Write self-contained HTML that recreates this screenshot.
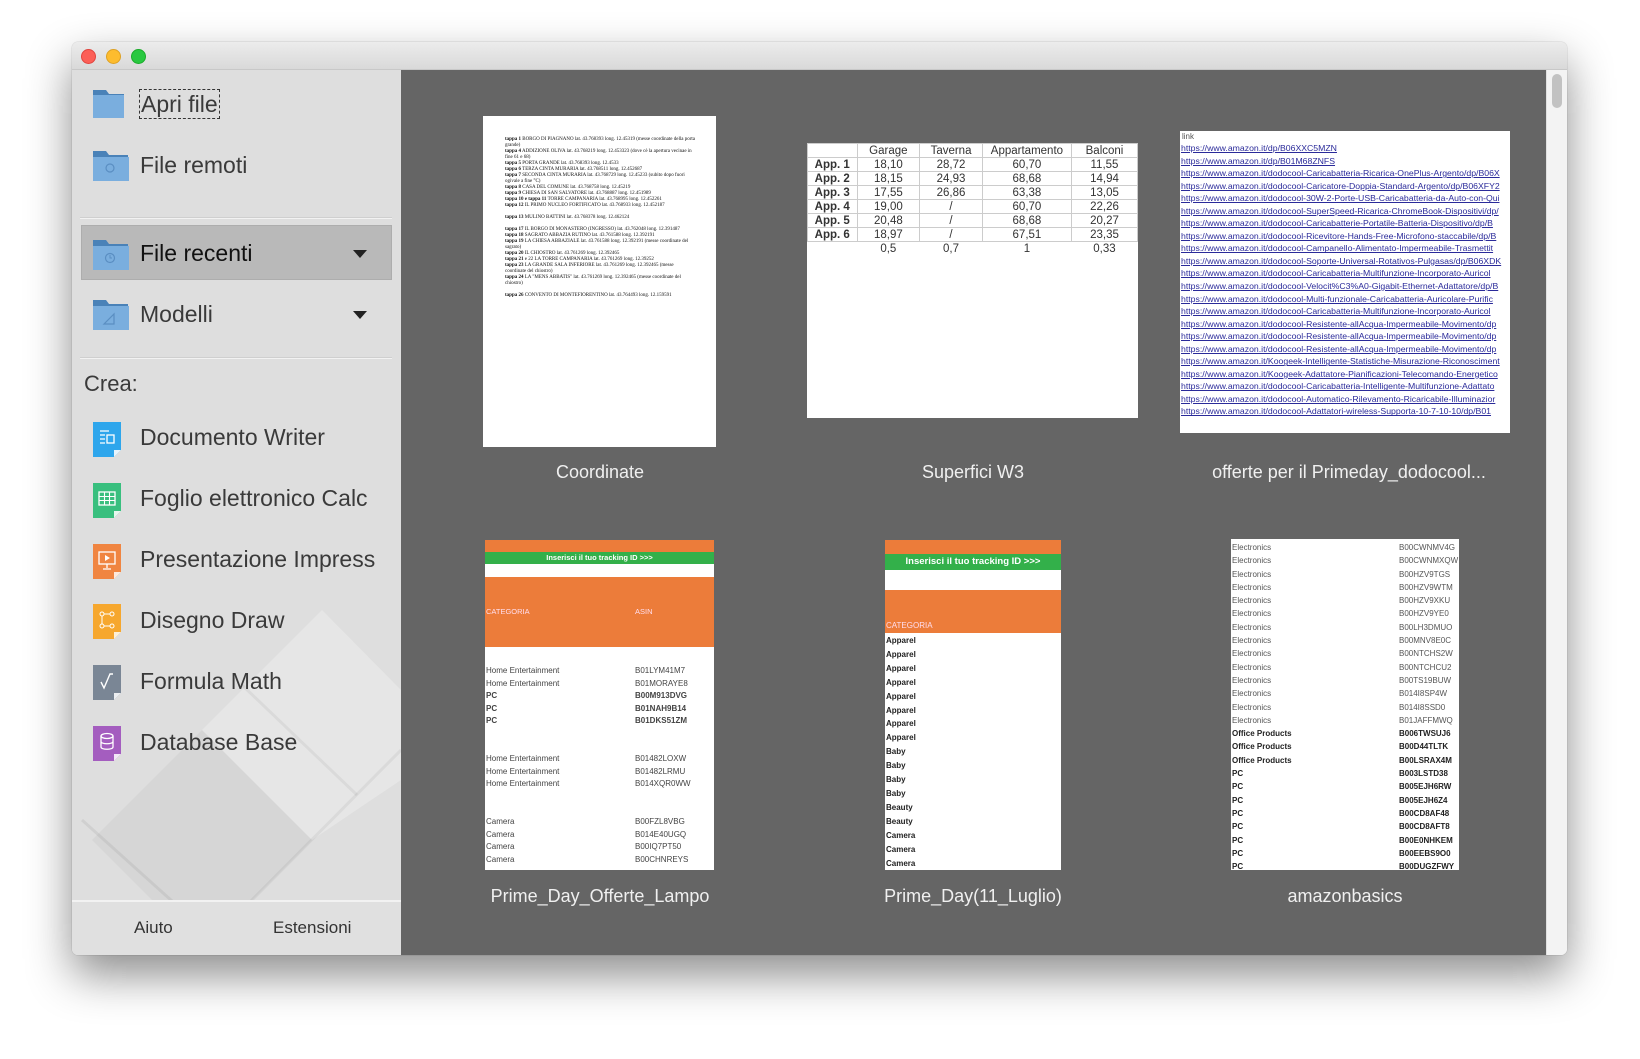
<!DOCTYPE html>
<html><head><meta charset="utf-8">
<style>
*{margin:0;padding:0;box-sizing:border-box}
body{width:1640px;height:1059px;background:#fff;font-family:"Liberation Sans",sans-serif;position:relative;overflow:hidden}
.win{position:absolute;left:72px;top:42px;width:1495px;height:913px;border-radius:6px;overflow:hidden;box-shadow:0 20px 45px rgba(0,0,0,.45),0 0 1px rgba(0,0,0,.4)}
.title{position:absolute;left:0;top:0;width:100%;height:28px;background:linear-gradient(#ececec,#d9d9d9);border-bottom:1px solid #c8c8c8}
.dot{position:absolute;top:7px;width:15px;height:15px;border-radius:50%}
.side{position:absolute;left:0;top:28px;width:329px;height:885px;background:#dedede;overflow:hidden}
.item{position:absolute;left:68px;font-size:23px;color:#3a3a3a;line-height:28px}
.sep{position:absolute;left:8px;width:312px;height:2px;background:#f2f2f2;border-top:1px solid #cfcfcf}
.hl{position:absolute;left:9px;top:155px;width:311px;height:55px;background:#b9b9b9;border:1px solid #adadad}
.arrow{position:absolute;left:281px;width:0;height:0;border-left:7px solid transparent;border-right:7px solid transparent;border-top:8px solid #222}
.ic{position:absolute;left:20px}
.bottom{position:absolute;left:0;top:830px;width:329px;height:55px;background:#e0e0e0;border-top:2px solid #f2f2f2}
.bottom span{position:absolute;top:16px;font-size:17px;color:#333}
.main{position:absolute;left:329px;top:28px;width:1145px;height:885px;background:#656565}
.sb{position:absolute;left:1474px;top:28px;width:21px;height:885px;background:#f3f3f3;border-left:1px solid #e0e0e0}
.thumb{position:absolute;background:#fff;overflow:hidden}
.lbl{position:absolute;color:#f0f0f0;font-size:18px;text-align:center;width:400px}
.tiny{font-size:5px;line-height:6px;color:#111;font-family:"Liberation Serif",serif}
table.sf{border-collapse:collapse;font-size:11.5px;font-family:"Liberation Sans",sans-serif;color:#333;width:100%}
table.sf td{border:1px solid #ccc;text-align:center;height:14px;line-height:12px;padding:0}
.links{font-size:8.7px;line-height:12.55px;color:#2a2a9a;font-family:"Liberation Sans",sans-serif;white-space:nowrap;text-decoration:underline;padding-left:1px}
.rows{font-size:8px;line-height:12.6px;font-family:"Liberation Sans",sans-serif;color:#444;white-space:nowrap}
</style></head><body>
<div class="win">
 <div class="title">
  <div class="dot" style="left:9px;background:#fc5f57;border:1px solid #e0443e"></div>
  <div class="dot" style="left:34px;background:#fdbc2e;border:1px solid #dea123"></div>
  <div class="dot" style="left:59px;background:#29c840;border:1px solid #1aab29"></div>
 </div>
 <div class="side">
  <svg style="position:absolute;left:0;top:520px" width="329" height="320"><polygon points="20,250 130,140 240,250 170,320 90,320" fill="rgba(0,0,0,.035)"/><polygon points="130,140 250,20 329,100 329,190 240,250" fill="rgba(255,255,255,.25)"/><polyline points="10,230 110,320" stroke="rgba(0,0,0,.06)" stroke-width="3" fill="none"/><polyline points="170,320 329,160" stroke="rgba(0,0,0,.05)" stroke-width="3" fill="none"/><polyline points="170,95 285,205" stroke="rgba(0,0,0,.05)" stroke-width="3" fill="none"/></svg>
  <svg class="ic" style="top:18px" width="33" height="30"><path d="M1 2h13l3 4h15v24H1z" fill="#4a82b8"/><rect x="1" y="7" width="31" height="23" fill="#7aaede"/></svg>
  <div class="item" style="top:20px;outline:1px dashed #333;padding:0 1px">Apri file</div>
  <svg class="ic" style="top:79px" width="37" height="32"><path d="M1 2h13l3 4h19v26H1z" fill="#4a82b8"/><rect x="1" y="8" width="36" height="24" fill="#7aaede"/><circle cx="18" cy="19" r="4" fill="none" stroke="#5a8ec2" stroke-width="1.2"/></svg>
  <div class="item" style="top:81px">File remoti</div>
  <div class="sep" style="top:147px"></div>
  <div class="hl"></div>
  <svg class="ic" style="top:168px" width="37" height="32"><path d="M1 2h13l3 4h19v26H1z" fill="#4a82b8"/><rect x="1" y="8" width="36" height="24" fill="#7aaede"/><circle cx="18" cy="20" r="4.5" fill="none" stroke="#5a8ec2" stroke-width="1.2"/><path d="M18 17v3h2" stroke="#5a8ec2" fill="none"/></svg>
  <div class="item" style="top:169px;color:#111">File recenti</div>
  <div class="arrow" style="top:180px"></div>
  <svg class="ic" style="top:228px" width="37" height="32"><path d="M1 2h13l3 4h19v26H1z" fill="#4a82b8"/><rect x="1" y="8" width="36" height="24" fill="#7aaede"/><path d="M12 26l10-10v10z" fill="none" stroke="#5a8ec2" stroke-width="1.2"/></svg>
  <div class="item" style="top:230px">Modelli</div>
  <div class="arrow" style="top:241px"></div>
  <div class="sep" style="top:287px"></div>
  <div class="item" style="left:12px;top:300px;font-size:22px">Crea:</div>
  <svg class="ic" style="top:351px" width="30" height="37"><path d="M1 1h28v28l-7 7H1z" fill="#2ea6ec"/><path d="M22 36l7-7h-7z" fill="#e8f4fc"/><path d="M8 10h9M8 14h5M8 18h5M8 22h5" stroke="#fff" stroke-width="1.3"/><rect x="15" y="14" width="7" height="8" fill="none" stroke="#fff" stroke-width="1.3"/></svg>
  <div class="item" style="top:353px">Documento Writer</div>
  <svg class="ic" style="top:412px" width="30" height="37"><path d="M1 1h28v28l-7 7H1z" fill="#38bf7e"/><path d="M22 36l7-7h-7z" fill="#e6f7ee"/><rect x="7" y="10" width="16" height="13" fill="none" stroke="#fff" stroke-width="1.3"/><path d="M7 14.5h16M7 18.5h16M12.5 10v13M17.5 10v13" stroke="#fff" stroke-width="1.1"/></svg>
  <div class="item" style="top:414px">Foglio elettronico Calc</div>
  <svg class="ic" style="top:473px" width="30" height="37"><path d="M1 1h28v28l-7 7H1z" fill="#f08541"/><path d="M22 36l7-7h-7z" fill="#fde9dc"/><rect x="7" y="9" width="16" height="12" fill="none" stroke="#fff" stroke-width="1.3"/><path d="M13 12v6l5-3z" fill="#fff"/><path d="M15 21v4M11 26h8" stroke="#fff" stroke-width="1.3"/></svg>
  <div class="item" style="top:475px">Presentazione Impress</div>
  <svg class="ic" style="top:533px" width="30" height="37"><path d="M1 1h28v28l-7 7H1z" fill="#f6a72e"/><path d="M22 36l7-7h-7z" fill="#fdf0d8"/><circle cx="10" cy="11" r="2" fill="none" stroke="#fff"/><circle cx="20" cy="11" r="2" fill="none" stroke="#fff"/><circle cx="10" cy="23" r="2" fill="none" stroke="#fff"/><circle cx="20" cy="23" r="2" fill="none" stroke="#fff"/><path d="M12 11h6M10 13v8M12 23h6" stroke="#fff"/></svg>
  <div class="item" style="top:536px">Disegno Draw</div>
  <svg class="ic" style="top:594px" width="30" height="37"><path d="M1 1h28v28l-7 7H1z" fill="#7a8695"/><path d="M22 36l7-7h-7z" fill="#eceef1"/><path d="M9 18l3 6 6-14h3" stroke="#fff" stroke-width="1.4" fill="none"/></svg>
  <div class="item" style="top:597px">Formula Math</div>
  <svg class="ic" style="top:655px" width="30" height="37"><path d="M1 1h28v28l-7 7H1z" fill="#a45dbf"/><path d="M22 36l7-7h-7z" fill="#f2e8f6"/><ellipse cx="15" cy="11" rx="6" ry="2.5" fill="none" stroke="#fff" stroke-width="1.3"/><path d="M9 11v11c0 3 12 3 12 0V11M9 16.5c0 3 12 3 12 0" fill="none" stroke="#fff" stroke-width="1.3"/></svg>
  <div class="item" style="top:658px">Database Base</div>
  <div class="bottom"><span style="left:62px">Aiuto</span><span style="left:201px">Estensioni</span></div>
 </div>
 <div class="main"></div>
 <div class="sb"><div style="position:absolute;left:5px;top:4px;width:10px;height:34px;border-radius:5px;background:#c2c2c2"></div></div>
</div>

<div class="thumb" style="left:483px;top:116px;width:233px;height:331px">
 <div class="tiny" style="position:absolute;left:22px;top:21px;width:190px">
 <b>tappa 1</b> BORGO DI PIAGNANO lat. 43.768393 long. 12.45319 (messe coordinate della porta grande)<br><b>tappa 4</b> ADDIZIONE OLIVA lat. 43.768219 long. 12.453323 (dove cè la apertura vecinae in fine 61 e 68)<br><b>tappa 5</b> PORTA GRANDE lat. 43.768393 long. 12.4533<br><b>tappa 6</b> TERZA CINTA MURARIA lat. 43.768511 long. 12.452687<br><b>tappa 7</b> SECONDA CINTA MURARIA lat. 43.768729 long. 12.45233 (subito dopo fuori ogivale a fine °C)<br><b>tappa 8</b> CASA DEL COMUNE lat. 43.768758 long. 12.45219<br><b>tappa 9</b> CHIESA DI SAN SALVATORE lat. 43.768887 long. 12.451989<br><b>tappa 10 e tappa 11</b> TORRE CAMPANARIA lat. 43.768995 long. 12.452261<br><b>tappa 12</b> IL PRIMO NUCLEO FORTIFICATO lat. 43.768933 long. 12.452187<br><br><b>tappa 13</b> MULINO BATTINI lat. 43.768378 long. 12.462124<br><br><b>tappa 17</b> IL BORGO DI MONASTERO (INGRESSO) lat. 43.762048 long. 12.391487<br><b>tappa 18</b> SAGRATO ABBAZIA RUTINO lat. 43.761588 long. 12.392191<br><b>tappa 19</b> LA CHIESA ABBAZIALE lat. 43.761588 long. 12.392191 (messe coordinate del sagrato)<br><b>tappa 20</b> IL CHIOSTRO lat. 43.761269 long. 12.392465<br><b>tappa 21</b> e 22 LA TORRE CAMPANARIA lat. 43.761269 long. 12.39252<br><b>tappa 23</b> LA GRANDE SALA INFERIORE lat. 43.761269 long. 12.392465 (messe coordinate del chiostro)<br><b>tappa 24</b> LA "MENS ABBATIS" lat. 43.761269 long. 12.392465 (messe coordinate del chiostro)<br><br><b>tappa 26</b> CONVENTO DI MONTEFIORENTINO lat. 43.764493 long. 12.159591
 </div>
</div>
<div class="lbl" style="left:400px;top:462px">Coordinate</div>

<div class="thumb" style="left:807px;top:143px;width:331px;height:275px">
 <table class="sf">
  <tr><td style="width:15%"></td><td style="width:19%">Garage</td><td style="width:19%">Taverna</td><td style="width:27%">Appartamento</td><td style="width:20%">Balconi</td></tr>
  <tr><td><b>App. 1</b></td><td>18,10</td><td>28,72</td><td>60,70</td><td>11,55</td></tr>
  <tr><td><b>App. 2</b></td><td>18,15</td><td>24,93</td><td>68,68</td><td>14,94</td></tr>
  <tr><td><b>App. 3</b></td><td>17,55</td><td>26,86</td><td>63,38</td><td>13,05</td></tr>
  <tr><td><b>App. 4</b></td><td>19,00</td><td>/</td><td>60,70</td><td>22,26</td></tr>
  <tr><td><b>App. 5</b></td><td>20,48</td><td>/</td><td>68,68</td><td>20,27</td></tr>
  <tr><td><b>App. 6</b></td><td>18,97</td><td>/</td><td>67,51</td><td>23,35</td></tr>
  <tr><td style="border:none"></td><td style="border:none">0,5</td><td style="border:none">0,7</td><td style="border:none">1</td><td style="border:none">0,33</td></tr>
 </table>
</div>
<div class="lbl" style="left:773px;top:462px">Superfici W3</div>

<div class="thumb" style="left:1180px;top:131px;width:330px;height:302px">
 <div style="font-size:8px;color:#555;padding-left:2px;line-height:10px;margin-top:1px">link</div>
 <div class="links">https://www.amazon.it/dp/B06XXC5MZN<br>https://www.amazon.it/dp/B01M68ZNFS<br>https://www.amazon.it/dodocool-Caricabatteria-Ricarica-OnePlus-Argento/dp/B06X<br>https://www.amazon.it/dodocool-Caricatore-Doppia-Standard-Argento/dp/B06XFY2<br>https://www.amazon.it/dodocool-30W-2-Porte-USB-Caricabatteria-da-Auto-con-Qui<br>https://www.amazon.it/dodocool-SuperSpeed-Ricarica-ChromeBook-Dispositivi/dp/<br>https://www.amazon.it/dodocool-Caricabatterie-Portatile-Batteria-Dispositivo/dp/B<br>https://www.amazon.it/dodocool-Ricevitore-Hands-Free-Microfono-staccabile/dp/B<br>https://www.amazon.it/dodocool-Campanello-Alimentato-Impermeabile-Trasmettit<br>https://www.amazon.it/dodocool-Soporte-Universal-Rotativos-Pulgasas/dp/B06XDK<br>https://www.amazon.it/dodocool-Caricabatteria-Multifunzione-Incorporato-Auricol<br>https://www.amazon.it/dodocool-Velocit%C3%A0-Gigabit-Ethernet-Adattatore/dp/B<br>https://www.amazon.it/dodocool-Multi-funzionale-Caricabatteria-Auricolare-Purific<br>https://www.amazon.it/dodocool-Caricabatteria-Multifunzione-Incorporato-Auricol<br>https://www.amazon.it/dodocool-Resistente-allAcqua-Impermeabile-Movimento/dp<br>https://www.amazon.it/dodocool-Resistente-allAcqua-Impermeabile-Movimento/dp<br>https://www.amazon.it/dodocool-Resistente-allAcqua-Impermeabile-Movimento/dp<br>https://www.amazon.it/Koogeek-Intelligente-Statistiche-Misurazione-Riconosciment<br>https://www.amazon.it/Koogeek-Adattatore-Pianificazioni-Telecomando-Energetico<br>https://www.amazon.it/dodocool-Caricabatteria-Intelligente-Multifunzione-Adattato<br>https://www.amazon.it/dodocool-Automatico-Rilevamento-Ricaricabile-Illuminazior<br>https://www.amazon.it/dodocool-Adattatori-wireless-Supporta-10-7-10-10/dp/B01</div>
</div>
<div class="lbl" style="left:1149px;top:462px">offerte per il Primeday_dodocool...</div>

<div class="thumb" style="left:485px;top:540px;width:229px;height:330px">
 <div style="height:12px;background:#ec7c3a"></div>
 <div style="height:12px;background:#33b04a;color:#fff;font-size:7.5px;font-weight:bold;text-align:center;line-height:12px">Inserisci il tuo tracking ID &gt;&gt;&gt;</div>
 <div style="height:13px;background:#fff"></div>
 <div style="height:70px;background:#ec7c3a;position:relative;color:#fde;font-size:7.5px"><span style="position:absolute;left:1px;top:30px">CATEGORIA</span><span style="position:absolute;left:150px;top:30px">ASIN</span></div>
 <div class="rows" style="position:absolute;left:1px;top:125px">Home Entertainment<br>Home Entertainment<br><b>PC</b><br><b>PC</b><br><b>PC</b><br><br><br>Home Entertainment<br>Home Entertainment<br>Home Entertainment<br><br><br>Camera<br>Camera<br>Camera<br>Camera</div>
 <div class="rows" style="position:absolute;left:150px;top:125px">B01LYM41M7<br>B01MORAYE8<br><b>B00M913DVG</b><br><b>B01NAH9B14</b><br><b>B01DKS51ZM</b><br><br><br>B01482LOXW<br>B01482LRMU<br>B014XQR0WW<br><br><br>B00FZL8VBG<br>B014E40UGQ<br>B00IQ7PT50<br>B00CHNREYS</div>
</div>
<div class="lbl" style="left:400px;top:886px">Prime_Day_Offerte_Lampo</div>

<div class="thumb" style="left:885px;top:540px;width:176px;height:330px">
 <div style="height:14px;background:#ec7c3a"></div>
 <div style="height:16px;background:#33b04a;color:#fff;font-size:9.5px;font-weight:bold;text-align:center;line-height:16px">Inserisci il tuo tracking ID &gt;&gt;&gt;</div>
 <div style="height:20px;background:#fff"></div>
 <div style="height:43px;background:#ec7c3a;position:relative;color:#fde;font-size:8px"><span style="position:absolute;left:1px;top:31px">CATEGORIA</span></div>
 <div class="rows" style="position:absolute;left:1px;top:94px;line-height:13.9px;color:#222;font-weight:bold">Apparel<br>Apparel<br>Apparel<br>Apparel<br>Apparel<br>Apparel<br>Apparel<br>Apparel<br>Baby<br>Baby<br>Baby<br>Baby<br>Beauty<br>Beauty<br>Camera<br>Camera<br>Camera</div>
</div>
<div class="lbl" style="left:773px;top:886px">Prime_Day(11_Luglio)</div>

<div class="thumb" style="left:1231px;top:539px;width:228px;height:331px">
 <div class="rows" style="position:absolute;left:1px;top:2px;line-height:13.3px;color:#555">Electronics<br>Electronics<br>Electronics<br>Electronics<br>Electronics<br>Electronics<br>Electronics<br>Electronics<br>Electronics<br>Electronics<br>Electronics<br>Electronics<br>Electronics<br>Electronics<br><b style="color:#222">Office Products<br>Office Products<br>Office Products<br>PC<br>PC<br>PC<br>PC<br>PC<br>PC<br>PC<br>PC</b></div>
 <div class="rows" style="position:absolute;left:168px;top:2px;line-height:13.3px;color:#555">B00CWNMV4G<br>B00CWNMXQW<br>B00HZV9TGS<br>B00HZV9WTM<br>B00HZV9XKU<br>B00HZV9YE0<br>B00LH3DMUO<br>B00MNV8E0C<br>B00NTCHS2W<br>B00NTCHCU2<br>B00TS19BUW<br>B014I8SP4W<br>B014I8SSD0<br>B01JAFFMWQ<br><b style="color:#222">B006TWSUJ6<br>B00D44TLTK<br>B00LSRAX4M<br>B003LSTD38<br>B005EJH6RW<br>B005EJH6Z4<br>B00CD8AF48<br>B00CD8AFT8<br>B00E0NHKEM<br>B00EEBS9O0<br>B00DUGZFWY</b></div>
</div>
<div class="lbl" style="left:1145px;top:886px">amazonbasics</div>
</body></html>
